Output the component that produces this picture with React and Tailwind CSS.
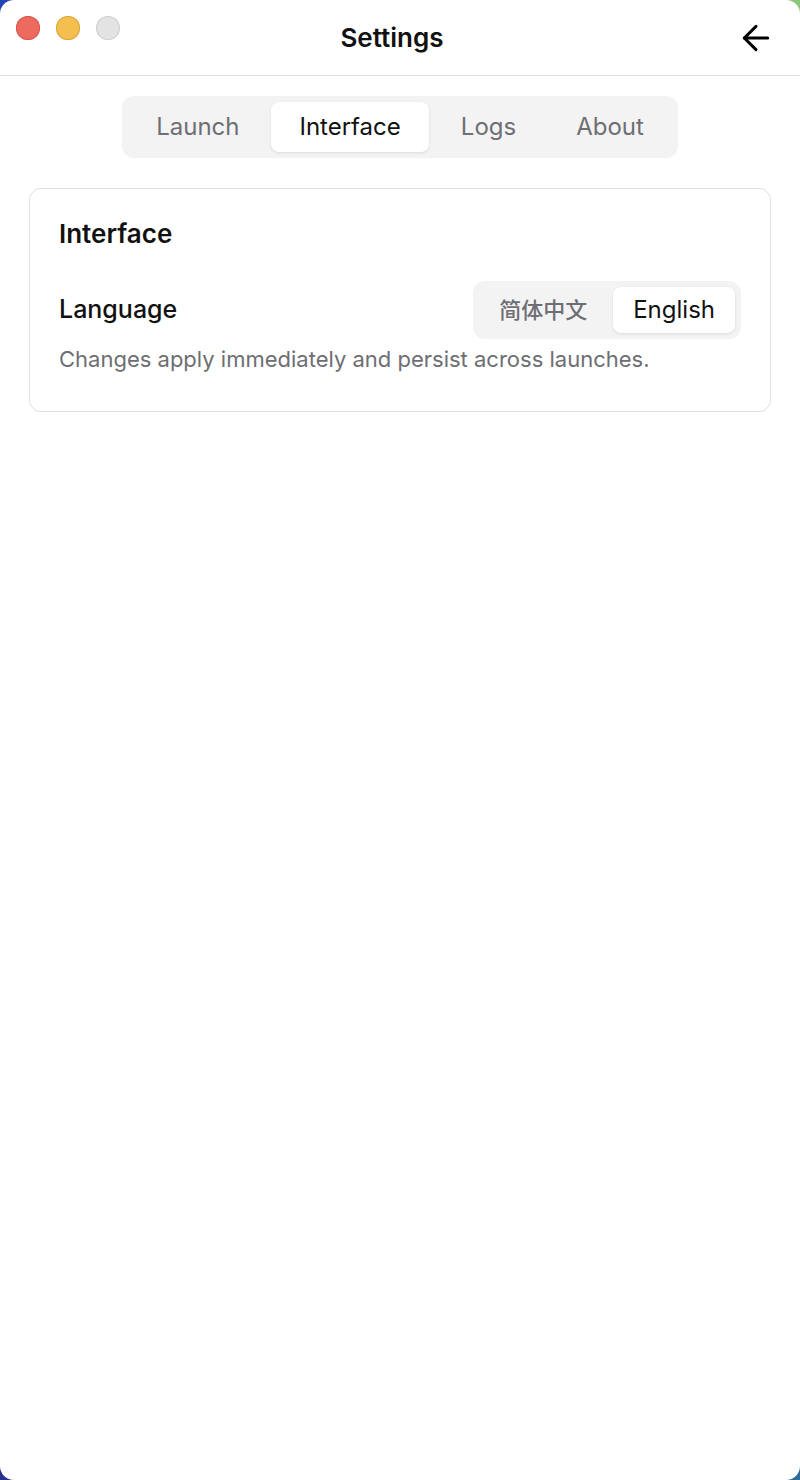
import { ArrowLeft } from 'lucide-react';
import clsx from 'clsx';

const tabs = ['Launch', 'Interface', 'Logs', 'About'];

export default function App() {
  const active = 'Interface';

  return (
    <div className="h-[1480px] w-[800px] bg-[conic-gradient(#8fc47e_45deg,#2f7c9c_135deg,#23208e_225deg,#2444b4_315deg)] font-['Inter','Noto_Sans_CJK_SC',sans-serif]">
      <div className="flex h-full flex-col overflow-hidden rounded-[14px] bg-white">
        {/* title bar */}
        <div className="grid h-[76px] shrink-0 grid-cols-[1fr_auto_1fr] border-b-[1.5px] border-[#dedede]">
          <div className="flex items-start gap-4 pl-4 pt-4">
            <span className="h-6 w-6 rounded-full bg-[#ec6a5e] ring-1 ring-inset ring-[#d85a4f]" />
            <span className="h-6 w-6 rounded-full bg-[#f4bf4f] ring-1 ring-inset ring-[#dca53e]" />
            <span className="h-6 w-6 rounded-full bg-[#e3e3e3] ring-1 ring-inset ring-[#d0d0d0]" />
          </div>
          <div className="mr-4 flex items-center text-[26px] font-semibold text-[#111]">Settings</div>
          <div className="flex items-center justify-end pr-[32px]">
            <ArrowLeft size={40} strokeWidth={1.8} className="-mr-[8px] text-black" />
          </div>
        </div>

        {/* tabs */}
        <div className="mt-5 flex justify-center">
          <div className="flex gap-1 rounded-[12px] bg-[#f3f3f4] p-[6px]">
            {tabs.map((t) => (
              <button
                key={t}
                className={clsx(
                  'h-[50px] rounded-[8px] px-[28px] text-[24px]',
                  t === active ? 'bg-white text-[#111] shadow-[0_1px_3px_rgba(0,0,0,0.1)]' : 'text-[#6e6e73]'
                )}
              >
                {t}
              </button>
            ))}
          </div>
        </div>

        {/* card */}
        <div className="mx-[29px] mt-[30px] rounded-[12px] border-[1.5px] border-[#dedede] px-[29px] pb-[38px] pt-[29px]">
          <h2 className="text-[26px] font-semibold leading-[32px] text-[#111]">Interface</h2>
          <div className="mt-[31px] flex items-center justify-between">
            <span className="text-[25px] font-medium text-[#111]">Language</span>
            <div className="flex gap-[6px] rounded-[12px] bg-[#f3f3f4] p-[6px]">
              <button className="h-[46px] rounded-[8px] px-[20px] text-[22px] font-medium text-[#6e6e73]">简体中文</button>
              <button className="h-[46px] rounded-[8px] bg-white px-[20px] text-[24px] text-[#111] shadow-[0_1px_3px_rgba(0,0,0,0.1)]">English</button>
            </div>
          </div>
          <p className="mt-[6px] text-[22px] leading-[28px] text-[#6e6e73]">Changes apply immediately and persist across launches.</p>
        </div>
      </div>
    </div>
  );
}
